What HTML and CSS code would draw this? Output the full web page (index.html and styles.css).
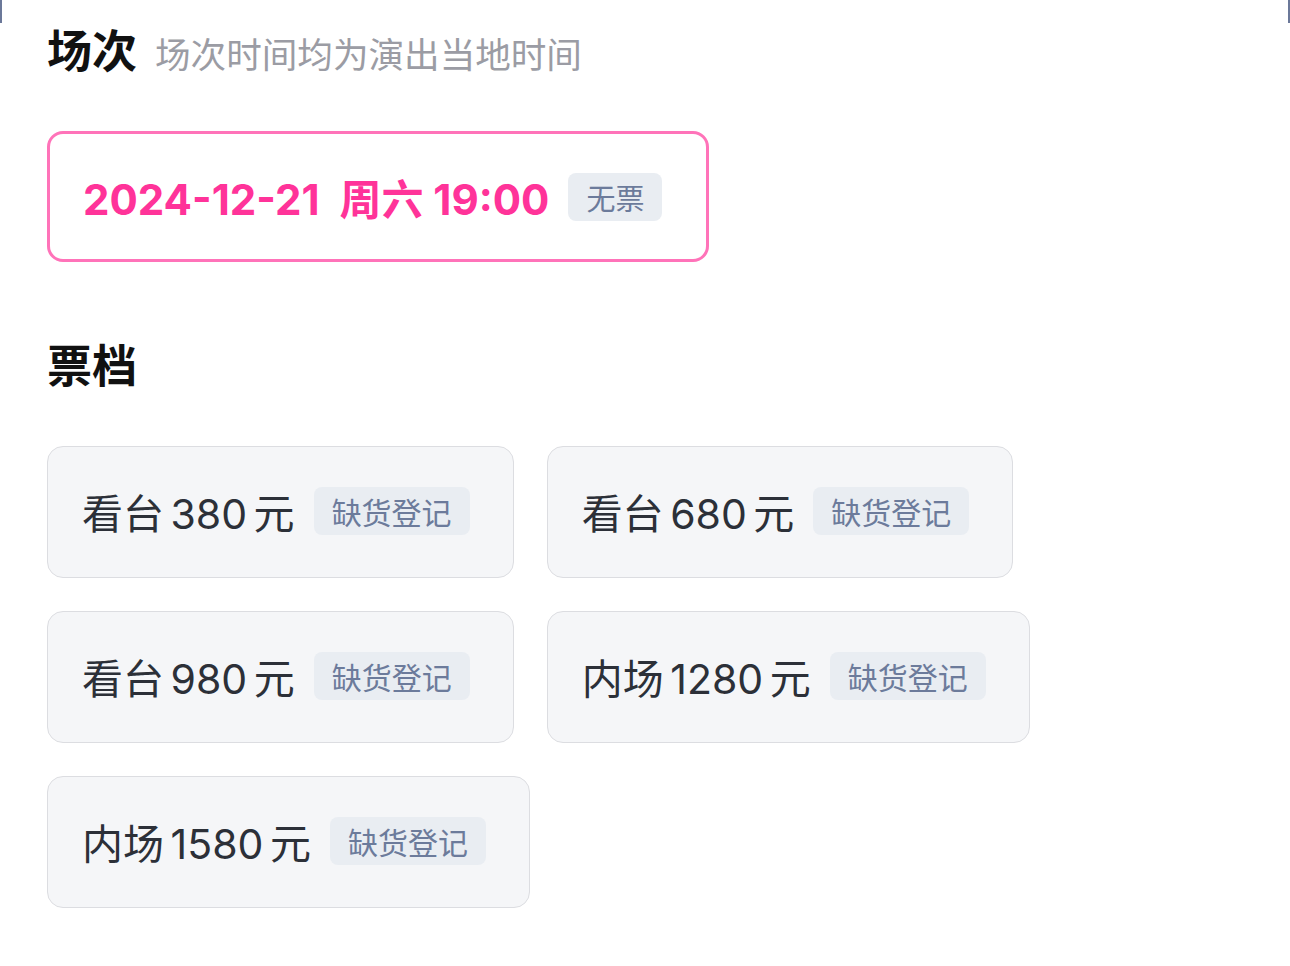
FILE: index.html
```html
<!DOCTYPE html>
<html lang="zh-CN">
<head>
    <meta charset="UTF-8">
    <meta name="viewport" content="width=device-width, initial-scale=1.0">
    <title>场次与票档</title>
    <link rel="stylesheet" href="styles.css">
</head>
<body>
    <div class="edge edge-left"></div>
    <div class="edge edge-right"></div>

    <div class="page">
        <!-- 场次 -->
        <div class="section-head">
            <h2 class="title">场次</h2>
            <span class="subtitle">场次时间均为演出当地时间</span>
        </div>

        <div class="session-list">
            <div class="session selected">
                <span class="session-time">2024-12-21&nbsp; 周六 19:00</span>
                <span class="tag">无票</span>
            </div>
        </div>

        <!-- 票档 -->
        <div class="section-head tickets-head">
            <h2 class="title">票档</h2>
        </div>

        <div class="ticket-list">
            <div class="ticket">
                <span class="price">看台 380 元</span>
                <span class="tag tag-lg">缺货登记</span>
            </div>
            <div class="ticket">
                <span class="price">看台 680 元</span>
                <span class="tag tag-lg">缺货登记</span>
            </div>
            <div class="ticket">
                <span class="price">看台 980 元</span>
                <span class="tag tag-lg">缺货登记</span>
            </div>
            <div class="ticket">
                <span class="price">内场 1280 元</span>
                <span class="tag tag-lg">缺货登记</span>
            </div>
            <div class="ticket">
                <span class="price">内场 1580 元</span>
                <span class="tag tag-lg">缺货登记</span>
            </div>
        </div>
    </div>
</body>
</html>
```

FILE: styles.css
```css
/* 页面 */
body {
    margin: 0;
    background-color: #fff;
    font-family: Inter, "Noto Sans CJK SC", sans-serif;
    color: #2c3038;
}

.edge {
    position: absolute;
    top: 0;
    width: 2px;
    height: 23px;
    background-color: #6b7899;
}

.edge-left {
    left: 0;
}

.edge-right {
    right: 0;
}

.page {
    padding: 26px 0 0 47px;
}

.section-head {
    display: flex;
    align-items: baseline;
    gap: 18px;
    height: 52px;
}

.title {
    margin: 0;
    font-size: 45px;
    line-height: 52px;
    font-weight: bold;
    color: #111;
}

.subtitle {
    font-size: 35.6px;
    color: #9b9ca4;
}

.session-list {
    margin-top: 53px;
}

.session {
    display: inline-flex;
    align-items: center;
    height: 131px;
    box-sizing: border-box;
    padding: 0 44px 0 33px;
    border: 3px solid #ff73b9;
    border-radius: 16px;
}

.session-time {
    font-size: 42px;
    font-weight: bold;
    color: #ff3399;
}

.tag {
    display: inline-flex;
    align-items: center;
    height: 48px;
    padding: 0 18px;
    margin-left: 19px;
    border-radius: 8px;
    background-color: #e9edf2;
    color: #6c7b9b;
    font-size: 29px;
}

.tag-lg {
    font-size: 30px;
}

.tickets-head {
    margin-top: 79px;
}

.ticket-list {
    display: flex;
    flex-wrap: wrap;
    gap: 33px;
    margin-top: 53px;
    padding-bottom: 40px;
}

.ticket {
    display: flex;
    align-items: center;
    height: 132px;
    box-sizing: border-box;
    padding: 0 43px 3px 34px;
    border: 1px solid #dcdde1;
    border-radius: 16px;
    background-color: #f5f6f8;
}

.price {
    font-size: 41px;
    word-spacing: -5px;
    color: #2c3038;
}
```
